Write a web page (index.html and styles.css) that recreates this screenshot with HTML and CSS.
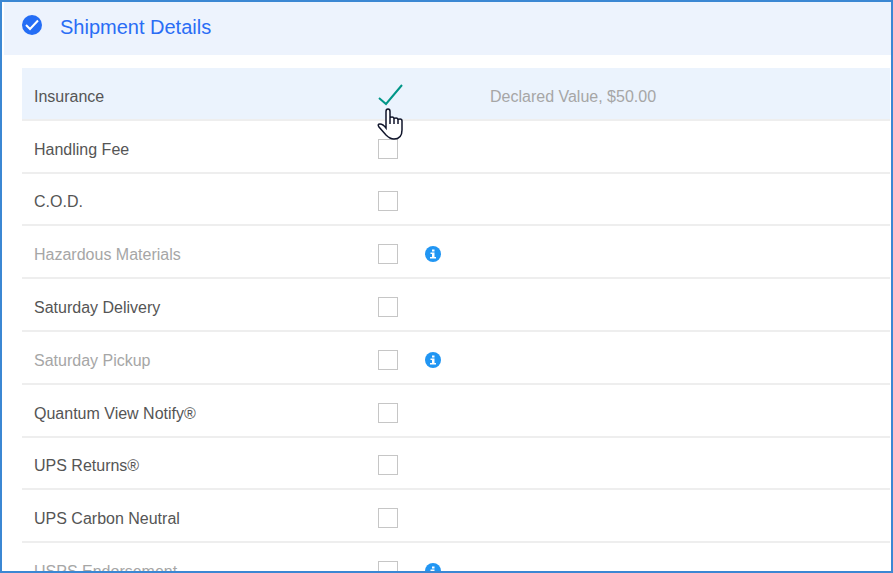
FILE: index.html
```html
<!DOCTYPE html>
<html lang="en">
<head>
<meta charset="utf-8">
<title>Shipment Details</title>
<link rel="stylesheet" href="styles.css">
</head>
<body>
<svg class="defs" aria-hidden="true">
  <symbol id="info" viewBox="0 0 16 16">
    <circle cx="8" cy="8" r="8" fill="#2196f3"/>
    <path fill="#fff" d="M7 3.500h2.500v2H7zM5.500 6.500h4v4.500H11v1.500H5V11h2V8H5.500z"/>
  </symbol>
</svg>
<main class="panel">
  <header class="panel-header">
    <svg class="status" viewBox="0 0 20 20" aria-hidden="true">
      <circle cx="10" cy="10" r="10" fill="#246df5"/>
      <path d="M4 10l4 4 8-8.500" fill="none" stroke="#fff" stroke-width="2"/>
    </svg>
    <h1>Shipment Details</h1>
  </header>
  <form class="options">
    <div class="row selected">
      <label for="insurance">Insurance</label>
      <div class="control">
        <input type="checkbox" id="insurance" checked>
        <svg class="tick" viewBox="0 0 26 22" aria-hidden="true"><path d="M1 14l7 6L24 1" fill="none" stroke="#009688" stroke-width="2"/></svg>
        <svg class="pointer" viewBox="0 0 26 32" aria-hidden="true"><path d="M9 19V3.500Q9 1 11 1t2 2.500V10Q13 9 15 9t2 2Q17 10 19 10t2 2Q21 11 23 11t2 2V22Q25 31 17 31 13 31 9 27L2 19Q0 16 3 16 6 16 9 20z" fill="#fff" stroke="#10152b" stroke-width="1.500"/><path d="M13 10v6M17 11v5M21 12v4" stroke="#10152b" stroke-width="1.500"/></svg>
      </div>
      <span class="note">Declared Value, $50.00</span>
    </div>
    <div class="row"><label for="handling">Handling Fee</label><div class="control"><input type="checkbox" id="handling"></div></div>
    <div class="row"><label for="cod">C.O.D.</label><div class="control"><input type="checkbox" id="cod"></div></div>
    <div class="row unavailable"><label for="hazmat">Hazardous Materials</label><div class="control"><input type="checkbox" id="hazmat" disabled><svg class="info"><use href="#info"/></svg></div></div>
    <div class="row"><label for="sat-delivery">Saturday Delivery</label><div class="control"><input type="checkbox" id="sat-delivery"></div></div>
    <div class="row unavailable"><label for="sat-pickup">Saturday Pickup</label><div class="control"><input type="checkbox" id="sat-pickup" disabled><svg class="info"><use href="#info"/></svg></div></div>
    <div class="row"><label for="quantum">Quantum View Notify®</label><div class="control"><input type="checkbox" id="quantum"></div></div>
    <div class="row"><label for="returns">UPS Returns®</label><div class="control"><input type="checkbox" id="returns"></div></div>
    <div class="row"><label for="carbon">UPS Carbon Neutral</label><div class="control"><input type="checkbox" id="carbon"></div></div>
    <div class="row unavailable"><label for="endorsement">USPS Endorsement</label><div class="control"><input type="checkbox" id="endorsement" disabled><svg class="info"><use href="#info"/></svg></div></div>
  </form>
</main>
</body>
</html>
```
FILE: styles.css
```css
* { box-sizing: border-box; }

body {
  margin: 0;
  font: 16px/20px "Liberation Sans", Arial, sans-serif;
  color: #555;
}

.defs {
  position: absolute;
  width: 0;
  height: 0;
}

.panel {
  height: 100vh;
  overflow: hidden;
  border: 2px solid #3b87d3;
  background: #fff;
}

.panel-header {
  display: flex;
  align-items: center;
  gap: 18px;
  margin-left: 2px;
  padding: 12px 18px 15px;
  background: #edf3fd;
}

.status {
  width: 20px;
  height: 20px;
  margin-bottom: 4px;
}

h1 {
  margin: 0;
  font-size: 20px;
  line-height: 26px;
  font-weight: 400;
  color: #2a6df5;
}

.options {
  display: grid;
  grid-template-rows: repeat(10, 1fr);
  min-height: 528px;
  margin: 13px 1px 0 20px;
}

.row {
  display: grid;
  grid-template-columns: 344px 112px 1fr;
  align-items: center;
  padding: 5px 12px 0;
  border-bottom: 2px solid #eee;
}

.selected {
  background: #ebf3fd;
}

label,
.note {
  padding-top: 2px;
}

.unavailable,
.note {
  color: #a6a6a6;
}

.control {
  position: relative;
  display: flex;
  align-items: center;
  gap: 27px;
}

input {
  appearance: none;
  width: 20px;
  height: 20px;
  margin: 0;
  border: 1px solid #c6c6c6;
  background: #fff;
}

input:checked {
  border-color: transparent;
  background: transparent;
}

.tick {
  position: absolute;
  top: -2px;
  left: 0;
  width: 26px;
  height: 22px;
}

.pointer {
  position: absolute;
  z-index: 1;
  top: 22px;
  left: -1px;
  width: 26px;
  height: 32px;
}

.info {
  width: 16px;
  height: 16px;
}
```
